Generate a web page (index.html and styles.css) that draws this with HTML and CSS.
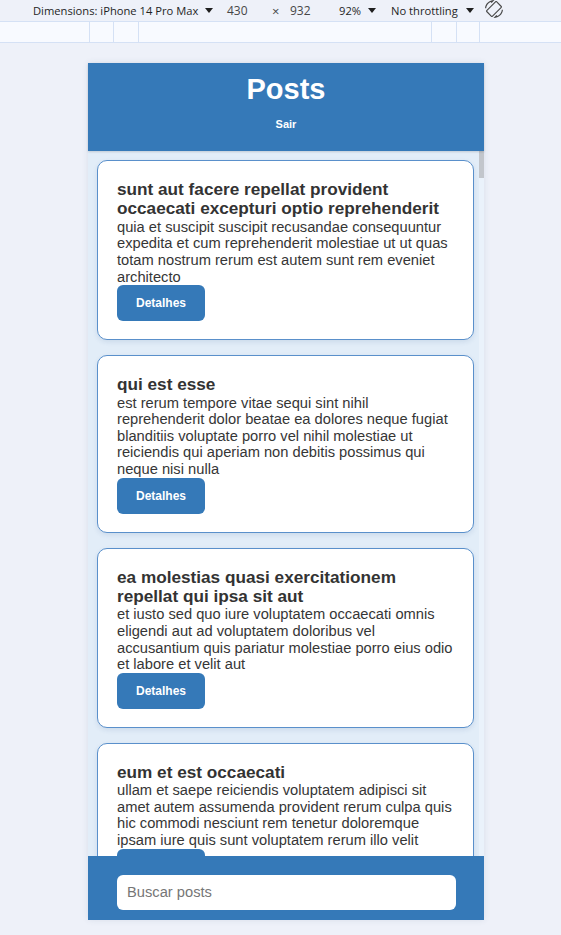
FILE: index.html
```html
<!DOCTYPE html>
<html lang="pt">
<head>
<meta charset="utf-8">
<title>Posts</title>
<link rel="stylesheet" href="styles.css">
</head>
<body>
<div class="toolbar">
  <span class="tb-dims">Dimensions: iPhone 14 Pro Max</span><span class="caret"></span>
  <span class="tb-num1">430</span><span class="tb-x">×</span><span class="tb-num2">932</span>
  <span class="tb-zoom">92%</span><span class="caret"></span>
  <span class="tb-throttle">No throttling</span><span class="caret"></span>
  <svg class="tb-rotate" viewBox="0 0 24 24" width="18" height="18"><path fill="#474747" d="M16.48 2.52c3.27 1.55 5.61 4.72 5.970 8.48h1.5C23.44 4.84 18.29 0 12 0l-.66.03 3.81 3.81 1.33-1.32zm-6.25-.77c-.59-.59-1.540-.59-2.120 0L1.75 8.11c-.59.59-.59 1.54 0 2.12l12.02 12.02c.59.59 1.54.59 2.12 0l6.36-6.36c.59-.59.59-1.54 0-2.12L10.23 1.750zm4.6 19.44L2.81 9.17l6.36-6.36 12.02 12.02-6.36 6.36zm-7.31.29C4.25 19.940 1.91 16.76 1.55 13H.05C.56 19.16 5.71 24 12 24l.66-.03-3.81-3.81-1.33 1.320z"/></svg>
</div>
<div class="ruler">
  <div></div><div></div><div></div><div></div><div></div><div></div><div></div>
</div>
<div class="stage">
  <div class="device">
    <header class="app-header">
      <h1 class="app-title">Posts</h1>
      <button class="logout">Sair</button>
    </header>
    <div class="content">
      <div class="list">
        <article class="card">
          <h2 class="card-title">sunt aut facere repellat provident occaecati excepturi optio reprehenderit</h2>
          <p class="card-body">quia et suscipit suscipit recusandae consequuntur expedita et cum reprehenderit molestiae ut ut quas totam nostrum rerum est autem sunt rem eveniet architecto</p>
          <button class="btn">Detalhes</button>
        </article>
        <article class="card">
          <h2 class="card-title">qui est esse</h2>
          <p class="card-body">est rerum tempore vitae sequi sint nihil reprehenderit dolor beatae ea dolores neque fugiat blanditiis voluptate porro vel nihil molestiae ut reiciendis qui aperiam non debitis possimus qui neque nisi nulla</p>
          <button class="btn">Detalhes</button>
        </article>
        <article class="card">
          <h2 class="card-title">ea molestias quasi exercitationem repellat qui ipsa sit aut</h2>
          <p class="card-body">et iusto sed quo iure voluptatem occaecati omnis eligendi aut ad voluptatem doloribus vel accusantium quis pariatur molestiae porro eius odio et labore et velit aut</p>
          <button class="btn">Detalhes</button>
        </article>
        <article class="card">
          <h2 class="card-title">eum et est occaecati</h2>
          <p class="card-body">ullam et saepe reiciendis voluptatem adipisci sit amet autem assumenda provident rerum culpa quis hic commodi nesciunt rem tenetur doloremque ipsam iure quis sunt voluptatem rerum illo velit</p>
          <button class="btn">Detalhes</button>
        </article>
      </div>
      <div class="scrollbar"><div class="thumb"></div></div>
    </div>
    <footer class="app-footer">
      <input class="search" type="text" placeholder="Buscar posts">
    </footer>
  </div>
</div>
</body>
</html>
```
FILE: styles.css
```css
* { box-sizing: border-box; }
html, body { margin: 0; padding: 0; }
body {
  background: #eef1f9;
  width: 561px;
  height: 935px;
  overflow: hidden;
  font-family: "Liberation Sans", Arial, sans-serif;
}

/* devtools toolbar */
.toolbar {
  height: 21px;
  display: flex;
  align-items: center;
  padding-left: 33px;
  font-family: "Open Sans", "Noto Sans", sans-serif;
  font-size: 11.2px;
  color: #1f1f1f;
  white-space: nowrap;
  background: #eef1f9;
}
.toolbar span { display: inline-block; overflow: visible; }
.tb-dims { width: 172px; }
.caret {
  width: 0; height: 0;
  border-left: 4px solid transparent;
  border-right: 4px solid transparent;
  border-top: 5px solid #1f1f1f;
}
.tb-num1 { margin-left: 14px; width: 45px; color: #474747; font-size: 12px; }
.tb-x { width: 18px; color: #474747; font-size: 13px; }
.tb-num2 { width: 49px; color: #474747; font-size: 12px; }
.tb-zoom { width: 29px; }
.tb-throttle { margin-left: 15px; width: 75px; }
.tb-rotate { margin-left: 11px; transform: scaleX(-1); margin-top: -3px; }

.ruler {
  height: 22px;
  background: #f8faff;
  border-top: 1px solid #d5e1f5;
  border-bottom: 1px solid #d5e1f5;
  display: grid;
  grid-template-columns: 90px 24px 25px 293px 25px 23px 1fr;
}
.ruler div { border-right: 1px solid #d5e1f5; }
.ruler div:last-child { border-right: none; }

.stage {
  padding: 20px 0 0 88px;
}
.device {
  width: 396px;
  height: 857px;
  display: flex;
  flex-direction: column;
  box-shadow: 0 0 6px rgba(60, 80, 120, 0.12);
  background: #e2edf8;
}

.app-header {
  height: 88px;
  flex: none;
  background: #3579b8;
  display: flex;
  flex-direction: column;
  align-items: center;
  padding-top: 10px;
  box-shadow: 0 1px 2px rgba(0,0,0,0.15);
  position: relative;
  z-index: 1;
}
.app-title {
  margin: 0;
  font-size: 29px;
  font-weight: bold;
  color: #fff;
  line-height: 33px;
}
.logout {
  margin-top: 12px;
  background: none;
  border: none;
  padding: 0;
  color: #fff;
  font-family: "Liberation Sans", Arial, sans-serif;
  font-weight: bold;
  font-size: 11px;
  line-height: 13px;
}

.content {
  flex: 1;
  min-height: 0;
  overflow: hidden;
  display: flex;
  background: #e2edf8;
}
.list {
  width: 377px;
  margin-left: 9px;
  padding-top: 9px;
  display: flex;
  flex-direction: column;
  gap: 15px;
}
.scrollbar {
  width: 5px;
  margin-left: 5px;
  background: #eaf2fb;
}
.thumb {
  height: 27px;
  background: #c2c6cc;
}

.card {
  flex: none;
  background: #fff;
  border: 1px solid #5a90cb;
  border-radius: 10px;
  padding: 19px 19px 18px 19px;
  box-shadow: 0 2px 5px rgba(40, 80, 140, 0.12);
}
.card-title {
  margin: 0;
  font-size: 17.2px;
  line-height: 19.4px;
  font-weight: bold;
  color: #333;
}
.card-body {
  margin: 0;
  font-size: 14.7px;
  line-height: 16.6px;
  color: #363636;
}
.btn {
  display: block;
  width: 88px;
  height: 36px;
  background: #3579b8;
  color: #fff;
  border: none;
  border-radius: 6px;
  font-family: "Liberation Sans", Arial, sans-serif;
  font-weight: bold;
  font-size: 12px;
  padding: 0;
}

.app-footer {
  height: 64px;
  flex: none;
  background: #3579b8;
  padding: 19px 28px 10px 29px;
}
.search {
  display: block;
  width: 100%;
  height: 35px;
  border: none;
  border-radius: 6px;
  background: #fff;
  padding: 0 10px 1px;
  font-family: "Liberation Sans", Arial, sans-serif;
  font-size: 14.7px;
  color: #333;
  outline: none;
}
.search::placeholder { color: #767676; }
```
